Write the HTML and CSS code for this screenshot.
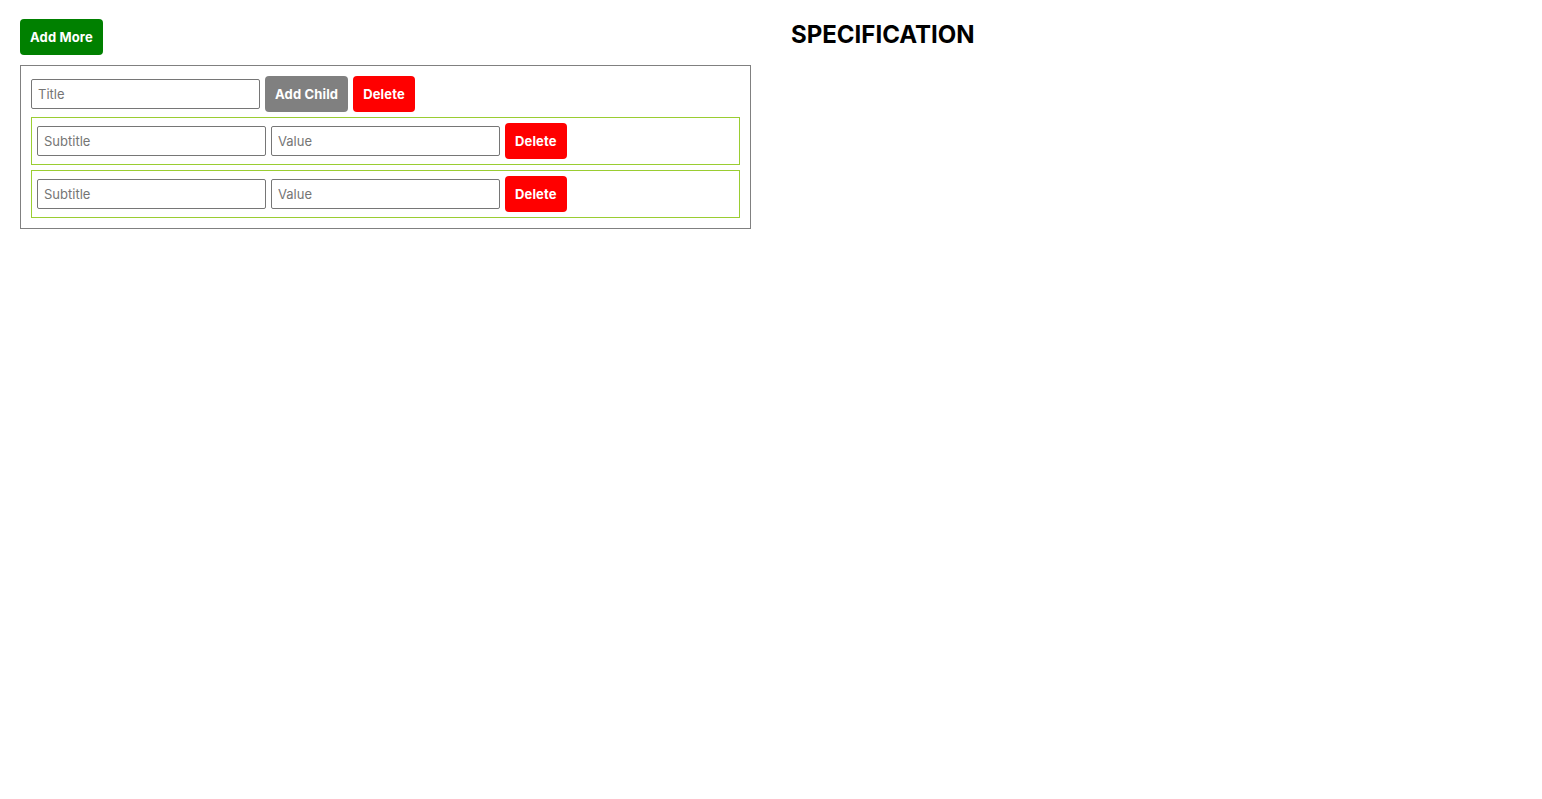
FILE: index.html
```html
<!DOCTYPE html>
<html>
<head>
<meta charset="utf-8">
<link rel="stylesheet" href="styles.css">
</head>
<body>
<div class="page">
  <div class="editor">
    <div class="toolbar"><button class="btn btn-green">Add More</button></div>
    <div class="group">
      <div class="row">
        <input class="field" placeholder="Title">
        <button class="btn btn-gray">Add Child</button>
        <button class="btn btn-red">Delete</button>
      </div>
      <div class="child">
        <input class="field" placeholder="Subtitle">
        <input class="field" placeholder="Value">
        <button class="btn btn-red">Delete</button>
      </div>
      <div class="child">
        <input class="field" placeholder="Subtitle">
        <input class="field" placeholder="Value">
        <button class="btn btn-red">Delete</button>
      </div>
    </div>
  </div>
  <div class="spec">
    <h2 class="spec-title">SPECIFICATION</h2>
  </div>
</div>
</body>
</html>
```
FILE: styles.css
```css
* { box-sizing: border-box; }
body {
  margin: 0;
  font-family: Inter, "Noto Sans", sans-serif;
  background: #fff;
}
.page {
  display: grid;
  grid-template-columns: 1fr 1fr;
  column-gap: 40px;
  padding: 19px 20px;
  align-items: start;
}
.toolbar {
  display: flex;
  margin-bottom: 10px;
}
.btn {
  height: 36px;
  padding: 0 10px;
  border: none;
  border-radius: 4px;
  color: #fff;
  font-family: Inter, "Noto Sans", sans-serif;
  font-weight: 700;
  font-size: 13px;
  letter-spacing: 0.15px;
  cursor: pointer;
}
.btn-green { background: #008000; }
.btn-gray { background: #808080; }
.btn-red { background: #ff0000; }
.group {
  border: 1px solid #808080;
  padding: 10px;
}
.row, .child {
  display: flex;
  align-items: center;
  gap: 5px;
}
.child {
  margin-top: 5px;
  border: 1px solid #9acd32;
  padding: 5px;
}
.field {
  width: 229px;
  height: 30px;
  border: 1px solid #767676;
  border-radius: 2px;
  padding: 0 6px;
  font-family: Inter, "Noto Sans", sans-serif;
  font-size: 13px;
  color: #000;
}
.field::placeholder { color: #757575; }
.spec-title {
  margin: 0;
  padding-top: 1px;
  font-size: 24px;
  font-weight: 700;
  line-height: 29px;
  color: #000;
}
```
